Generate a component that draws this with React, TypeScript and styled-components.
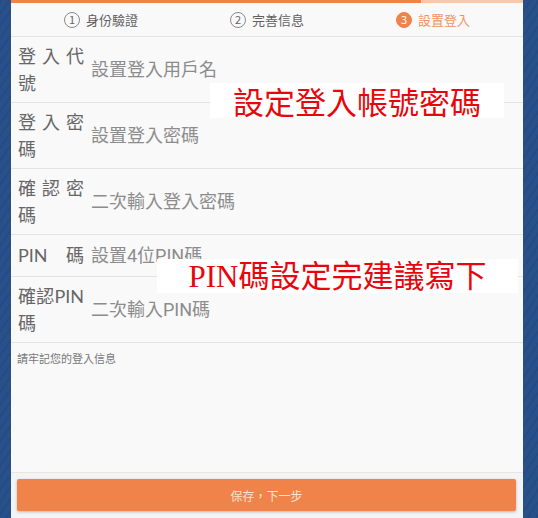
import React from "react";
import styled, { createGlobalStyle } from "styled-components";

const GlobalStyle = createGlobalStyle`
    html, body {
        margin: 0;
        padding: 0;
        background: #28508b;
        font-family: "Noto Sans CJK TC", "Noto Sans", sans-serif;
    }
`;

const Page = styled.div`
    display: flex;
    height: 518px;
    padding: 0 15px 0 11px;
    background:
        repeating-linear-gradient(125deg, rgba(0,0,0,0.06) 0 2px, transparent 2px 7px),
        #28508b;
`;

const Panel = styled.div`
    position: relative;
    flex: 1;
    display: flex;
    flex-direction: column;
    background: #f9f9fa;
    overflow: hidden;
`;

const Progress = styled.div<{ $value: number }>`
    height: 3px;
    background: #f9c8a8;
    &::before {
        content: "";
        display: block;
        height: 100%;
        width: ${(p) => p.$value}%;
        background: #f0834a;
    }
`;

const Stepper = styled.div`
    display: grid;
    grid-template-columns: repeat(3, 1fr);
    height: 33px;
    padding: 0 7px;
    border-bottom: 1px solid #e4e4e4;
`;

const Step = styled.div<{ $active?: boolean }>`
    display: flex;
    align-items: center;
    justify-content: center;
    gap: 6px;
    font-size: 13px;
    color: ${(p) => (p.$active ? "#f2925f" : "#5f5f5f")};
`;

const StepNo = styled.span<{ $active?: boolean }>`
    box-sizing: border-box;
    width: 16px;
    height: 16px;
    border-radius: 50%;
    display: flex;
    align-items: center;
    justify-content: center;
    font-size: 11px;
    line-height: 1;
    border: 1px solid ${(p) => (p.$active ? "#f0834a" : "#8a8a8a")};
    background: ${(p) => (p.$active ? "#f0834a" : "transparent")};
    color: ${(p) => (p.$active ? "#fff" : "#666")};
`;

const Row = styled.label`
    display: flex;
    align-items: center;
    padding: 6px 7px;
    border-bottom: 1px solid #e3e3e3;
`;

const RowLabel = styled.span`
    width: 66px;
    flex-shrink: 0;
    font-family: Lato, "Noto Sans CJK TC", sans-serif;
    font-size: 18px;
    line-height: 26.5px;
    color: #666;
    text-align: justify;
    text-align-last: justify;
`;

const Field = styled.input`
    flex: 1;
    min-width: 0;
    height: 29px;
    margin-left: 7px;
    padding: 0;
    border: 0;
    outline: none;
    background: transparent;
    font-family: Roboto, "Noto Sans CJK TC", sans-serif;
    font-size: 18px;
    color: #333;
    &::placeholder {
        color: #8c8c8c;
    }
`;

const Hint = styled.p`
    margin: 0;
    padding: 7px 6px;
    font-size: 11px;
    color: #777;
`;

const Spacer = styled.div`
    flex: 1;
`;

const Footer = styled.div`
    padding: 6px 7px 7px 6px;
    border-top: 1px solid #e6e6e6;
    background: #f3f4f6;
`;

const SubmitButton = styled.button`
    display: block;
    width: 100%;
    height: 32px;
    border: 0;
    border-radius: 2px;
    background: #f0834a;
    box-shadow: 0 1px 3px rgba(0, 0, 0, 0.25);
    color: #fde3d2;
    font-family: inherit;
    font-size: 12px;
`;

const Note = styled.div<{ $serif?: boolean }>`
    position: absolute;
    display: flex;
    align-items: center;
    justify-content: center;
    background: #fff;
    color: #e8060c;
    font-size: 31px;
    line-height: 1;
    font-family: ${(p) =>
        p.$serif
            ? `"Liberation Serif", "Noto Sans CJK TC", serif`
            : `"Noto Sans CJK TC", sans-serif`};
`;

const steps = ["身份驗證", "完善信息", "設置登入"];

const fields = [
    { label: "登入代號", placeholder: "設置登入用戶名", type: "text" },
    { label: "登入密碼", placeholder: "設置登入密碼", type: "password" },
    { label: "確認密碼", placeholder: "二次輸入登入密碼", type: "password" },
    { label: "PIN 碼", placeholder: "設置4位PIN碼", type: "password" },
    { label: "確認PIN碼", placeholder: "二次輸入PIN碼", type: "password" },
];

const App = () => {
    const current = 3;

    return (
        <>
            <GlobalStyle />
            <Page>
                <Panel>
                    <Progress $value={80} />
                    <Stepper>
                        {steps.map((s, i) => (
                            <Step key={s} $active={i + 1 === current}>
                                <StepNo $active={i + 1 === current}>{i + 1}</StepNo>
                                {s}
                            </Step>
                        ))}
                    </Stepper>

                    {fields.map((f) => (
                        <Row key={f.label}>
                            <RowLabel>{f.label}</RowLabel>
                            <Field type={f.type} placeholder={f.placeholder} />
                        </Row>
                    ))}

                    <Hint>請牢記您的登入信息</Hint>
                    <Spacer />

                    <Footer>
                        <SubmitButton>保存，下一步</SubmitButton>
                    </Footer>

                    {/* 截圖上的說明標註 */}
                    <Note style={{ left: 199, top: 83, width: 294, height: 35 }}>
                        設定登入帳號密碼
                    </Note>
                    <Note $serif style={{ left: 146, top: 259, width: 361, height: 34 }}>
                        PIN碼設定完建議寫下
                    </Note>
                </Panel>
            </Page>
        </>
    );
};

export default App;
